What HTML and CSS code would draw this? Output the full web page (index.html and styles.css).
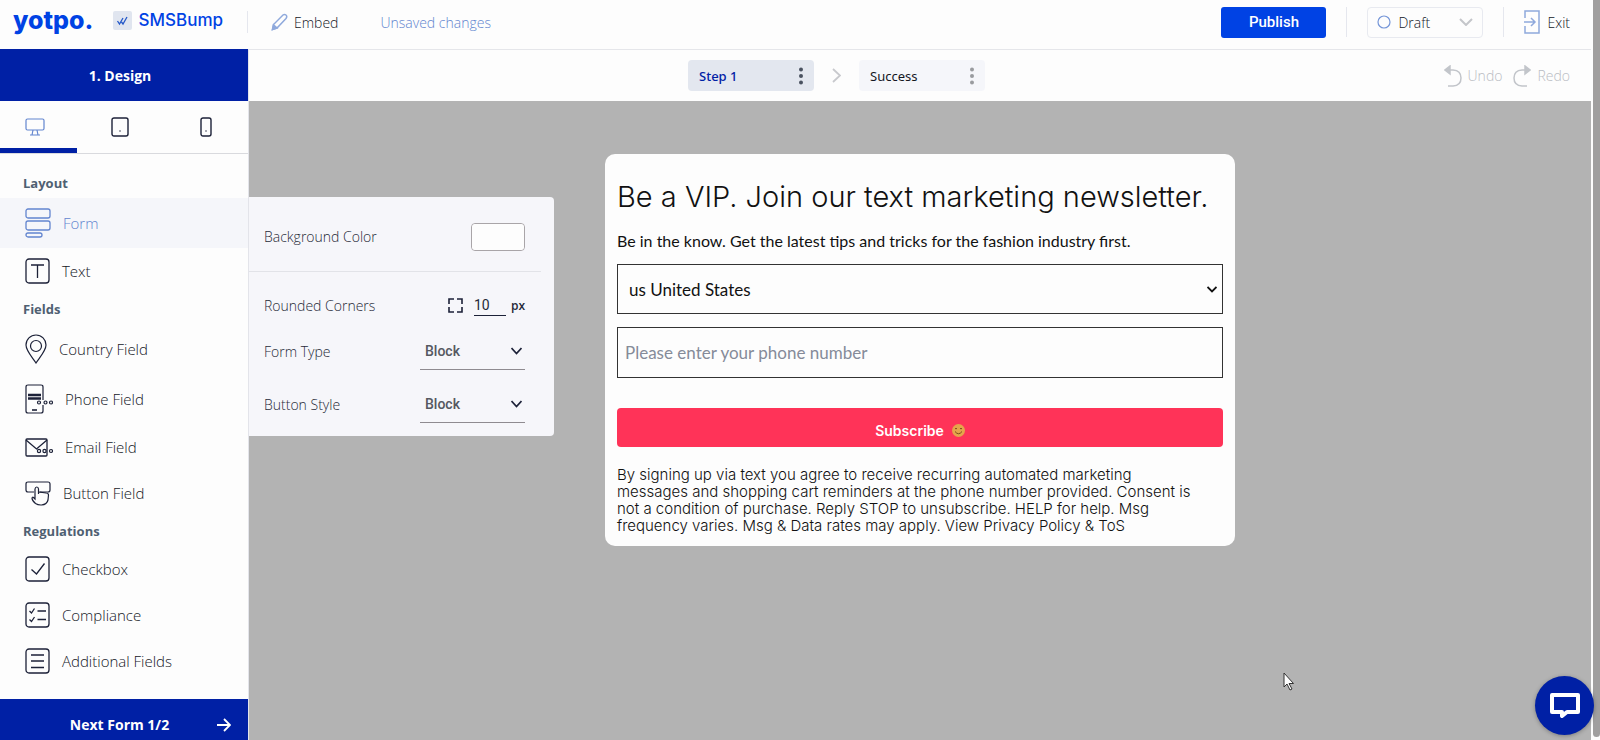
FILE: index.html
```html
<!DOCTYPE html>
<html lang="en">
  <head>
    <meta charset="UTF-8" />
    <meta name="viewport" content="width=device-width, initial-scale=1.0" />
    <title>Yotpo SMSBump - Form builder</title>
    <link rel="stylesheet" href="styles.css">
  </head>
  <body>
    <div class="page">
      <div class="app">
        <header class="header">
          <div class="brand">
            <a class="logo" href="#">yotpo.</a>
            <a class="product" href="#">
              <svg width="19" height="19" viewBox="0 0 19 19" fill="none">
                <rect width="19" height="19" rx="2" fill="#e0e5ef" />
                <path d="M4.500 10l2 3 3.500-6M8.500 11l1.500 2L14 6" stroke="#2458c8" stroke-width="1.300" />
              </svg>
              SMSBump
            </a>
          </div>
          <span class="divider small"></span>
          <button class="embed" type="button">
            <svg width="17" height="18" viewBox="0 0 17 18" fill="none" stroke="#8fa9dc" stroke-width="1.500">
              <path d="M1.500 16.500l1-5L12 2q1.500-1.200 3 0t0 3.500L6 15z" />
              <path d="M1.500 16.500l1-4.500 3.500 3z" fill="#8fa9dc" />
            </svg>
            Embed
          </button>
          <span class="unsaved">Unsaved changes</span>
          <div class="header-right">
            <button class="publish" type="button">Publish</button>
            <span class="divider"></span>
            <button class="status" type="button">
              <svg width="14" height="14" viewBox="0 0 14 14" fill="none" stroke="#7596d8" stroke-width="1.200">
                <circle cx="7" cy="7" r="6" />
              </svg>
              Draft
              <svg class="status-arrow" width="14" height="8" viewBox="0 0 14 8" fill="none" stroke="#c4c6ca" stroke-width="2">
                <path d="M1 1l6 6 6-6" />
              </svg>
            </button>
            <span class="divider"></span>
            <a class="exit" href="#">
              <svg width="16" height="24" viewBox="0 0 16 24" fill="none" stroke="#8fa9dc" stroke-width="1.500">
                <path d="M1 8V1h14v22H1v-7M0 12h10M7 8l4 4-4 4" />
              </svg>
              Exit
            </a>
          </div>
        </header>

        <nav class="sidebar">
          <h2 class="sidebar-title">1. Design</h2>
          <div class="devices">
            <button class="device active" type="button" aria-label="Desktop">
              <svg width="20" height="18" viewBox="0 0 20 18" fill="none" stroke="#6285cf" stroke-width="1.200">
                <rect x="1" y="1" width="18" height="11" rx="1.500" />
                <path d="M8 12l-1 5M12 12l1 5M5 17h10" />
              </svg>
            </button>
            <button class="device" type="button" aria-label="Tablet">
              <svg width="18" height="20" viewBox="0 0 18 20" fill="none" stroke="#1c2138" stroke-width="1.400">
                <rect x="1" y="1" width="16" height="18" rx="2" />
                <circle cx="9" cy="14" r=".5" stroke-width=".6" />
              </svg>
            </button>
            <button class="device" type="button" aria-label="Mobile">
              <svg width="12" height="20" viewBox="0 0 12 20" fill="none" stroke="#1c2138" stroke-width="1.400">
                <rect x="1" y="1" width="10" height="18" rx="2" />
                <circle cx="6" cy="14" r=".5" stroke-width=".6" />
              </svg>
            </button>
          </div>

          <div class="menu">
            <h3 class="menu-title">Layout</h3>
            <a class="item tall active" href="#">
              <svg width="26" height="30" viewBox="0 0 26 30" fill="none" stroke="#6285cf" stroke-width="1.300">
                <rect x="1" y="1" width="24" height="9" rx="2" />
                <rect x="1" y="13" width="24" height="9" rx="2" />
                <rect x="1" y="25" width="16" height="4" rx="2" />
              </svg>
              Form
            </a>
            <a class="item" href="#">
              <svg width="25" height="26" viewBox="0 0 25 26" fill="none" stroke="#1c2138" stroke-width="1.300">
                <rect x="1" y="1" width="23" height="24" rx="3" />
                <path d="M6 7h13M12.500 7v13" />
              </svg>
              Text
            </a>
            <h3 class="menu-title">Fields</h3>
            <a class="item tall" href="#">
              <svg width="22" height="30" viewBox="0 0 22 30" fill="none" stroke="#1c2138" stroke-width="1.200">
                <path d="M11 29C8 24 1 17 1 11a10 10 0 0 1 20 0c0 6-7 13-10 18z" />
                <circle cx="11" cy="12" r="5.500" />
              </svg>
              Country Field
            </a>
            <a class="item tall" href="#">
              <svg width="28" height="30" viewBox="0 0 28 30" fill="none" stroke="#1c2138" stroke-width="1.200">
                <path d="M18 16V3q0-2-2-2H3Q1 1 1 3v24q0 2 2 2h13q2 0 2-2v-6" />
                <path d="M3 11h13M3 14.500h13" stroke-width="2.600" />
                <path d="M7 26h5" stroke-width="1.600" />
                <g fill="#fdfdfd"><circle cx="14" cy="18.500" r="1.500" /><circle cx="20.500" cy="18.500" r="1.500" /><circle cx="26" cy="18.500" r="1.500" /></g>
              </svg>
              Phone Field
            </a>
            <a class="item" href="#">
              <svg width="28" height="19" viewBox="0 0 28 19" fill="none" stroke="#1c2138" stroke-width="1.300">
                <rect x="1" y="1" width="21" height="17" rx="1" />
                <path d="M1 2l10.500 9L22 2" />
                <g fill="#fdfdfd" stroke-width="1.200"><circle cx="14" cy="13" r="1.600" /><circle cx="19.500" cy="13" r="1.600" /><circle cx="26" cy="13" r="1.500" /></g>
              </svg>
              Email Field
            </a>
            <a class="item" href="#">
              <svg width="26" height="25" viewBox="0 0 26 25" fill="none" stroke="#1c2138" stroke-width="1.200">
                <path d="M9 11H3q-2 0-2-2V3q0-2 2-2h20q2 0 2 2v6q0 2-2 2h-8" />
                <path d="M13.500 11V8q-.2-2-1.700-2T10 8v10l-1.500-1.500q-1-.8-1.500.5 0 2.500 3.500 5.500 2.500 1.700 6 1.500 5.500-.5 6.500-5l.500-5q0-2-2.500-2l-7.500-1v2" />
              </svg>
              Button Field
            </a>
            <h3 class="menu-title">Regulations</h3>
            <a class="item" href="#">
              <svg width="25" height="26" viewBox="0 0 25 26" fill="none" stroke="#1c2138" stroke-width="1.300">
                <rect x="1" y="1" width="23" height="24" rx="3" />
                <path d="M6.500 13.500l5 4.500 8-10.500" />
              </svg>
              Checkbox
            </a>
            <a class="item" href="#">
              <svg width="25" height="26" viewBox="0 0 25 26" fill="none" stroke="#1c2138" stroke-width="1.300">
                <rect x="1" y="1" width="23" height="24" rx="3" />
                <path d="M4.500 9l2 2L9.500 6.500M4.500 17.500l2 2 3-4.500M12.500 9H21M12.500 17.500H21" />
              </svg>
              Compliance
            </a>
            <a class="item" href="#">
              <svg width="25" height="26" viewBox="0 0 25 26" fill="none" stroke="#1c2138" stroke-width="1.300">
                <rect x="1" y="1" width="23" height="24" rx="3" />
                <path d="M6 7h13M6 13h13M6 19.500h13" />
              </svg>
              Additional Fields
            </a>
          </div>

          <button class="next" type="button">
            <span class="next-label">Next Form 1/2</span>
            <svg width="14" height="14" viewBox="0 0 14 14" fill="none" stroke="#fff" stroke-width="1.800">
              <path d="M0 7h13M7 1l6 6-6 6" />
            </svg>
          </button>
        </nav>

        <main class="main">
          <div class="toolbar">
            <div class="steps">
              <button class="step active" type="button">
                Step 1
                <svg width="4" height="18" viewBox="0 0 4 18" fill="#4a5260">
                  <circle cx="2" cy="2.500" r="2" /><circle cx="2" cy="9" r="2" /><circle cx="2" cy="15.500" r="2" />
                </svg>
              </button>
              <svg width="9" height="15" viewBox="0 0 9 15" fill="none" stroke="#c8c9cd" stroke-width="1.800">
                <path d="M1 1l7 6.500L1 14" />
              </svg>
              <button class="step" type="button">
                Success
                <svg width="4" height="18" viewBox="0 0 4 18" fill="#999b9f">
                  <circle cx="2" cy="2.500" r="2" /><circle cx="2" cy="9" r="2" /><circle cx="2" cy="15.500" r="2" />
                </svg>
              </button>
            </div>
            <div class="history">
              <button type="button">
                <svg width="18" height="22" viewBox="0 0 18 22" fill="none" stroke="#c2c5ca" stroke-width="1.500">
                  <path d="M5 5h4q8 .5 8 8t-8 8H4" />
                  <path d="M6 1v8L1 5z" fill="#c2c5ca" />
                </svg>
                Undo
              </button>
              <button type="button">
                <svg width="18" height="22" viewBox="0 0 18 22" fill="none" stroke="#c2c5ca" stroke-width="1.500">
                  <path d="M13 5H9q-8 .5-8 8t8 8h5" />
                  <path d="M12 1v8l5-4z" fill="#c2c5ca" />
                </svg>
                Redo
              </button>
            </div>
          </div>

          <div class="canvas">
            <form class="panel">
              <div class="option color-option">
                <label for="background">Background Color</label>
                <input class="swatch" type="color" id="background" value="#fdfdfd" />
              </div>
              <div class="option corners-option">
                <label for="corners">Rounded Corners</label>
                <div class="corners">
                  <svg width="15" height="15" viewBox="0 0 15 15" fill="none" stroke="#1c2138" stroke-width="1.600">
                    <path d="M1 6V1h5M9 1h5v5M14 9v5H9M6 14H1V9" />
                  </svg>
                  <input class="number" type="text" id="corners" value="10" />
                  <span class="unit">px</span>
                </div>
              </div>
              <div class="option">
                <label for="formType">Form Type</label>
                <div class="dropdown">
                  <select id="formType"><option>Block</option></select>
                  <svg width="11" height="8" viewBox="0 0 11 8" fill="none" stroke="#1c2138" stroke-width="1.700">
                    <path d="M.5 1l5 5.500 5-5.500" />
                  </svg>
                </div>
              </div>
              <div class="option">
                <label for="buttonStyle">Button Style</label>
                <div class="dropdown">
                  <select id="buttonStyle"><option>Block</option></select>
                  <svg width="11" height="8" viewBox="0 0 11 8" fill="none" stroke="#1c2138" stroke-width="1.700">
                    <path d="M.5 1l5 5.500 5-5.500" />
                  </svg>
                </div>
              </div>
            </form>

            <form class="card">
              <h1>Be a VIP. Join our text marketing newsletter.</h1>
              <p class="intro">Be in the know. Get the latest tips and tricks for the fashion industry first.</p>
              <div class="country">
                <select aria-label="Country"><option>us United States</option></select>
                <svg width="10" height="7" viewBox="0 0 10 7" fill="none" stroke="#111" stroke-width="1.800">
                  <path d="M.5 1L5 5.500 9.500 1" />
                </svg>
              </div>
              <input class="phone" type="tel" aria-label="Phone number" placeholder="Please enter your phone number" />
              <button class="subscribe" type="button">
                Subscribe
                <svg width="13" height="13" viewBox="0 0 13 13" fill="none" stroke="#7b4a1c" stroke-width="1">
                  <circle cx="6.500" cy="6.500" r="6.500" fill="#e5a54b" stroke="none" />
                  <path d="M3 5q1-1.500 2 0M8 5q1-1.500 2 0M3 7.500q3.500 4.500 7 0" />
                </svg>
              </button>
              <p class="legal">
                By signing up via text you agree to receive recurring automated marketing<br />
                messages and shopping cart reminders at the phone number provided. Consent is<br />
                not a condition of purchase. Reply STOP to unsubscribe. HELP for help. Msg<br />
                frequency varies. Msg &amp; Data rates may apply. View Privacy Policy &amp; ToS
              </p>
            </form>
          </div>
        </main>
      </div>
      <div class="scrollbar"><div class="thumb"></div></div>
    </div>

    <button class="chat" type="button" aria-label="Chat">
      <svg width="30" height="26" viewBox="0 0 30 26" fill="none" stroke="#fff" stroke-width="4" stroke-linejoin="round">
        <path d="M2 2h26v17H17l-5 4v-4H2z" />
      </svg>
    </button>
    <svg class="cursor" width="12" height="19" viewBox="0 0 12 19" fill="#fff" stroke="#333" stroke-width="1">
      <path d="M1 1v14l3-3 3 6 2-1-3-5.500h4.500z" />
    </svg>
  </body>
</html>
```
FILE: styles.css
```css
* {
  box-sizing: border-box;
}

body {
  margin: 0;
  font-family: "Open Sans", "Noto Sans", sans-serif;
  font-size: 15px;
  font-weight: 300;
  color: #14171f;
  background-color: #fdfdfd;
}

button,
input,
select {
  font: inherit;
  color: inherit;
  padding: 0;
  border: none;
  background: none;
}

a {
  color: inherit;
  text-decoration: none;
}

h1,
h2,
h3,
p {
  margin: 0;
}

svg {
  flex-shrink: 0;
}

.page {
  display: flex;
  height: 100vh;
  overflow: hidden;
}

.app {
  flex: 1;
  display: grid;
  grid-template-columns: 249px 1fr;
  grid-template-rows: 49px 1fr;
}

/* Header */
.header {
  grid-column: 1 / 3;
  display: flex;
  align-items: center;
  padding: 0 21px 5px 13px;
  font-size: 14px;
}

.brand {
  display: flex;
  align-items: center;
  justify-content: space-between;
  width: 234px;
  padding-right: 24px;
}

.logo {
  padding-bottom: 4px;
  font-family: Inter, sans-serif;
  font-size: 25px;
  font-weight: 800;
  line-height: 36px;
  color: #0042e4;
}

.product {
  display: flex;
  align-items: center;
  gap: 7px;
  padding-bottom: 4px;
  font-family: Inter, sans-serif;
  font-size: 17px;
  font-weight: 500;
  color: #0042e4;
}

.divider {
  width: 1px;
  height: 30px;
  background-color: #e5e7ee;
}

.divider.small {
  height: 22px;
}

.embed {
  display: flex;
  align-items: center;
  gap: 6px;
  margin: 0 42px 0 23px;
}

.unsaved {
  color: #6285cf;
}

.header-right {
  display: flex;
  align-items: center;
  gap: 20px;
  margin-left: auto;
}

.publish {
  width: 105px;
  height: 31px;
  border-radius: 3px;
  background-color: #0042e4;
  color: #fff;
  font-family: Roboto, sans-serif;
  font-size: 15px;
  font-weight: 500;
}

.status {
  display: flex;
  align-items: center;
  gap: 7px;
  width: 116px;
  height: 31px;
  padding: 0 9px;
  border: 1px solid #e8eaf0;
  border-radius: 4px;
}

.status-arrow {
  margin-left: auto;
}

.exit {
  display: flex;
  align-items: center;
  gap: 7px;
}

/* Sidebar */
.sidebar {
  display: flex;
  flex-direction: column;
  border-right: 1px solid #e3e4ea;
}

.sidebar-title {
  height: 52px;
  line-height: 54px;
  padding-right: 8px;
  background-color: #0020a5;
  color: #fff;
  font-size: 14px;
  font-weight: 700;
  text-align: center;
}

.devices {
  display: grid;
  grid-template-columns: 77px 86px 86px;
  height: 53px;
  border-bottom: 1px solid #d9dade;
}

.device {
  display: flex;
  align-items: center;
  justify-content: center;
}

.device.active {
  padding: 5px 8px 0 0;
  border-bottom: 5px solid #0020a5;
}

.menu {
  padding-top: 14px;
}

.menu-title {
  padding-left: 23px;
  font-size: 13px;
  font-weight: 700;
  line-height: 30px;
  color: #4f6072;
}

.item {
  display: flex;
  align-items: center;
  gap: 12px;
  height: 46px;
  padding-left: 25px;
}

.item.tall {
  height: 50px;
}

.item.active {
  background-color: #f5f6fa;
  color: #6285cf;
}

.next {
  display: flex;
  align-items: center;
  margin-top: auto;
  height: 41px;
  padding: 10px 17px 0 0;
  background-color: #0020a5;
  color: #fff;
  font-size: 14px;
  font-weight: 700;
}

.next-label {
  flex: 1;
  padding-left: 22px;
}

/* Toolbar */
.main {
  display: flex;
  flex-direction: column;
}

.toolbar {
  display: grid;
  grid-template-columns: 1fr auto 1fr;
  align-items: center;
  height: 52px;
  padding-right: 21px;
  border-top: 1px solid #e5e6ea;
}

.steps {
  grid-column: 2;
  display: flex;
  align-items: center;
  gap: 18px;
  padding-right: 146px;
}

.step {
  display: flex;
  align-items: center;
  justify-content: space-between;
  width: 126px;
  height: 31px;
  padding: 0 11px;
  border-radius: 4px;
  background-color: #f5f6fa;
  font-family: "Noto Sans", sans-serif;
  font-size: 13px;
  font-weight: 400;
}

.step.active {
  background-color: #e3e7ef;
  color: #0020a5;
  font-weight: 500;
}

.history {
  display: flex;
  justify-content: flex-end;
  gap: 11px;
  font-size: 14px;
}

.history button {
  display: flex;
  align-items: center;
  gap: 6px;
  color: #b9bcc3;
}

/* Canvas */
.canvas {
  position: relative;
  flex: 1;
  padding-top: 53px;
  background-color: #b3b3b3;
}

.panel {
  position: absolute;
  top: 96px;
  left: 0;
  width: 305px;
  padding-bottom: 5px;
  border-radius: 0 4px 4px 0;
  background-color: #f6f6fa;
  color: #262a38;
  font-size: 14px;
}

.option {
  display: flex;
  align-items: center;
  justify-content: space-between;
  height: 53px;
  padding: 0 29px 0 15px;
}

.color-option {
  height: 75px;
  margin: 0 13px 13px 0;
  padding: 5px 16px 0 15px;
  border-bottom: 1px solid #e2e3e8;
}

.corners-option {
  height: 40px;
}

.swatch {
  width: 54px;
  height: 28px;
  border: 1px solid #a9a5a8;
  border-radius: 4px;
  background-color: #fdfdfd;
}

.swatch::-webkit-color-swatch-wrapper {
  padding: 0;
}

.swatch::-webkit-color-swatch {
  border: none;
  border-radius: 3px;
}

.corners {
  display: flex;
  align-items: center;
}

.number {
  width: 32px;
  height: 22px;
  margin: 0 5px 0 11px;
  border-bottom: 1px solid #1c2138;
  font-family: Roboto, sans-serif;
  font-weight: 400;
}

.unit {
  font-size: 12px;
  font-weight: 600;
}

.dropdown {
  display: grid;
  align-items: center;
  width: 105px;
  height: 36px;
  border-bottom: 1px solid #8f8b90;
}

.dropdown select,
.dropdown svg {
  grid-area: 1 / 1;
}

.dropdown select {
  appearance: none;
  padding-left: 5px;
  font-family: Roboto, sans-serif;
  font-weight: 500;
  color: #555861;
}

.dropdown svg {
  justify-self: end;
  margin-right: 3px;
  pointer-events: none;
}

/* Form preview */
.card {
  width: 630px;
  max-width: 100%;
  margin: 0 auto;
  padding: 24px 12px 12px;
  border-radius: 10px;
  background-color: #fdfdfd;
  color: #111;
}

.card h1 {
  font-family: Inter, sans-serif;
  font-size: 29px;
  font-weight: 300;
  line-height: 38px;
}

.intro {
  margin: 13px 0 11px;
  font-family: Lato, sans-serif;
  font-size: 16px;
  font-weight: 400;
  line-height: 24px;
}

.country {
  display: grid;
  align-items: center;
  height: 50px;
  margin-bottom: 13px;
  border: 1px solid #333;
}

.country select,
.country svg {
  grid-area: 1 / 1;
}

.country select {
  appearance: none;
  height: 100%;
  padding-left: 11px;
  font-family: Lato, sans-serif;
  font-size: 17px;
  font-weight: 400;
}

.country svg {
  justify-self: end;
  margin-right: 5px;
  pointer-events: none;
}

.phone {
  display: block;
  width: 100%;
  height: 51px;
  padding-left: 7px;
  border: 1px solid #333;
  font-family: Lato, sans-serif;
  font-size: 17px;
  font-weight: 400;
}

.phone::placeholder {
  color: #858b99;
}

.subscribe {
  display: flex;
  align-items: center;
  justify-content: center;
  gap: 8px;
  width: 100%;
  height: 39px;
  margin: 30px 0 19px;
  padding-top: 6px;
  border-radius: 4px;
  background-color: #ff3358;
  color: #fff;
  font-family: Inter, sans-serif;
  font-size: 14px;
  font-weight: 600;
}

.legal {
  font-family: Inter, sans-serif;
  font-size: 15px;
  line-height: 17px;
}

/* Page scrollbar */
.scrollbar {
  width: 9px;
  padding: 0 0 3px 2px;
}

.thumb {
  height: 100%;
  border-radius: 0 0 4px 4px;
  background-color: #a09f9f;
}

/* Chat bubble and pointer */
.chat {
  position: absolute;
  right: 6px;
  bottom: 5px;
  display: flex;
  align-items: center;
  justify-content: center;
  width: 59px;
  height: 59px;
  border-radius: 50%;
  background-color: #0020a5;
  box-shadow: 0 1px 4px rgba(0, 0, 0, 0.3);
}

.cursor {
  position: absolute;
  left: 1283px;
  top: 672px;
}
```
